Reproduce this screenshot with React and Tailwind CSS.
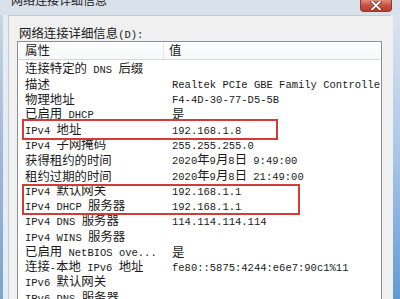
import React from "react";

const CJK = /[\u3000-\u9fff\uff00-\uffef]/;

// SimSun-style mix: full-width CJK, half-width latin
function Txt({ s }) {
  const parts = s.split(/([\u3000-\u9fff\uff00-\uffef]+)/);
  return parts.map((p, i) =>
    p === "" ? null : CJK.test(p) ? (
      <span key={i} className="font-['Noto_Sans_CJK_SC',sans-serif] text-[12.4px]">
        {p}
      </span>
    ) : (
      <span key={i} className="font-['Liberation_Mono',monospace] text-[10.5px] whitespace-pre">
        {p}
      </span>
    )
  );
}

const rows = [
  ["连接特定的 DNS 后缀", ""],
  ["描述", "Realtek PCIe GBE Family Controller"],
  ["物理地址", "F4-4D-30-77-D5-5B"],
  ["已启用 DHCP", "是"],
  ["IPv4 地址", "192.168.1.8"],
  ["IPv4 子网掩码", "255.255.255.0"],
  ["获得租约的时间", "2020年9月8日 9:49:00"],
  ["租约过期的时间", "2020年9月8日 21:49:00"],
  ["IPv4 默认网关", "192.168.1.1"],
  ["IPv4 DHCP 服务器", "192.168.1.1"],
  ["IPv4 DNS 服务器", "114.114.114.114"],
  ["IPv4 WINS 服务器", ""],
  ["已启用 NetBIOS ove...", "是"],
  ["连接-本地 IPv6 地址", "fe80::5875:4244:e6e7:90c1%11"],
  ["IPv6 默认网关", ""],
  ["IPv6 DNS 服务器", ""],
];

export default function App() {
  return (
    <div className="w-[400px] h-[299px] overflow-hidden flex flex-col bg-[#d9e1ea] text-[#1a1a1a]">
      {/* title bar */}
      <div className="h-[15px] shrink-0 flex items-start">
        <div className="pl-[11px] -mt-[9px] leading-[16px]">
          <span className="font-['Noto_Sans_CJK_SC',sans-serif] text-[12px] text-[#222]">网络连接详细信息</span>
        </div>
        <div className="ml-auto mr-[8px] w-[32px] h-[12px] rounded-b-[4px] border border-t-0 border-[#8a3b32] bg-gradient-to-b from-[#e08a7c] via-[#c9503f] to-[#b93a2b] flex items-center justify-center">
          <svg width="12" height="9" viewBox="0 0 12 9">
            <path d="M2 0.5 L10 8.5 M10 0.5 L2 8.5" stroke="#5a2a24" strokeWidth="3.4" strokeLinecap="round" />
            <path d="M2 0.5 L10 8.5 M10 0.5 L2 8.5" stroke="#ffffff" strokeWidth="2" strokeLinecap="round" />
          </svg>
        </div>
      </div>

      <div className="flex-1 flex min-h-0">
        {/* left frame */}
        <div className="w-[8px] shrink-0 flex">
          <div className="w-[3px] bg-gradient-to-b from-[#c9d5e3] via-[#9fb7d6] to-[#7fa2cf]" />
          <div className="flex-1 bg-[#e6ecf3]" />
        </div>

        {/* dialog body */}
        <div className="flex-1 bg-[#f0f0f0] border-l border-t border-[#c3cbd4] pl-[8px] pr-[9px] pt-[8px] min-w-0">
          <div className="h-[17px] pl-[2px] leading-[16px] whitespace-nowrap">
            <Txt s="网络连接详细信息(D):" />
          </div>

          <div className="relative border border-[#8e9196] bg-white">
            {/* header */}
            <div className="h-[18px] flex items-center border-b border-[#d5d8dc] bg-gradient-to-b from-white to-[#f7f8f9]">
              <div className="w-[146px] h-full pl-[7px] flex items-center border-r border-[#e1e4e8]">
                <Txt s="属性" />
              </div>
              <div className="pl-[5px] flex items-center">
                <Txt s="值" />
              </div>
            </div>

            {/* rows */}
            <div className="pt-[1px]">
              {rows.map(([k, v], i) => (
                <div key={i} className="h-[15.27px] flex items-center leading-[15px] whitespace-nowrap">
                  <div className="w-[147px] shrink-0 pl-[7px] overflow-hidden">
                    <Txt s={k} />
                  </div>
                  <div className="flex-1 pl-[7px] overflow-hidden">
                    <Txt s={v} />
                  </div>
                </div>
              ))}
            </div>

            {/* highlight boxes */}
            <div className="absolute left-[4px] top-[77px] w-[256px] h-[21px] border-2 border-[#d13b3b]" />
            <div className="absolute left-[4px] top-[142px] w-[278px] h-[31px] border-2 border-[#d13b3b]" />
          </div>
        </div>

        {/* right frame */}
        <div className="w-[9px] shrink-0 flex">
          <div className="w-[2px] bg-[#eef2f6]" />
          <div className="flex-1 bg-gradient-to-b from-[#dde5ee] via-[#a9c6e6] to-[#5f9ad6]" />
        </div>
      </div>
    </div>
  );
}
